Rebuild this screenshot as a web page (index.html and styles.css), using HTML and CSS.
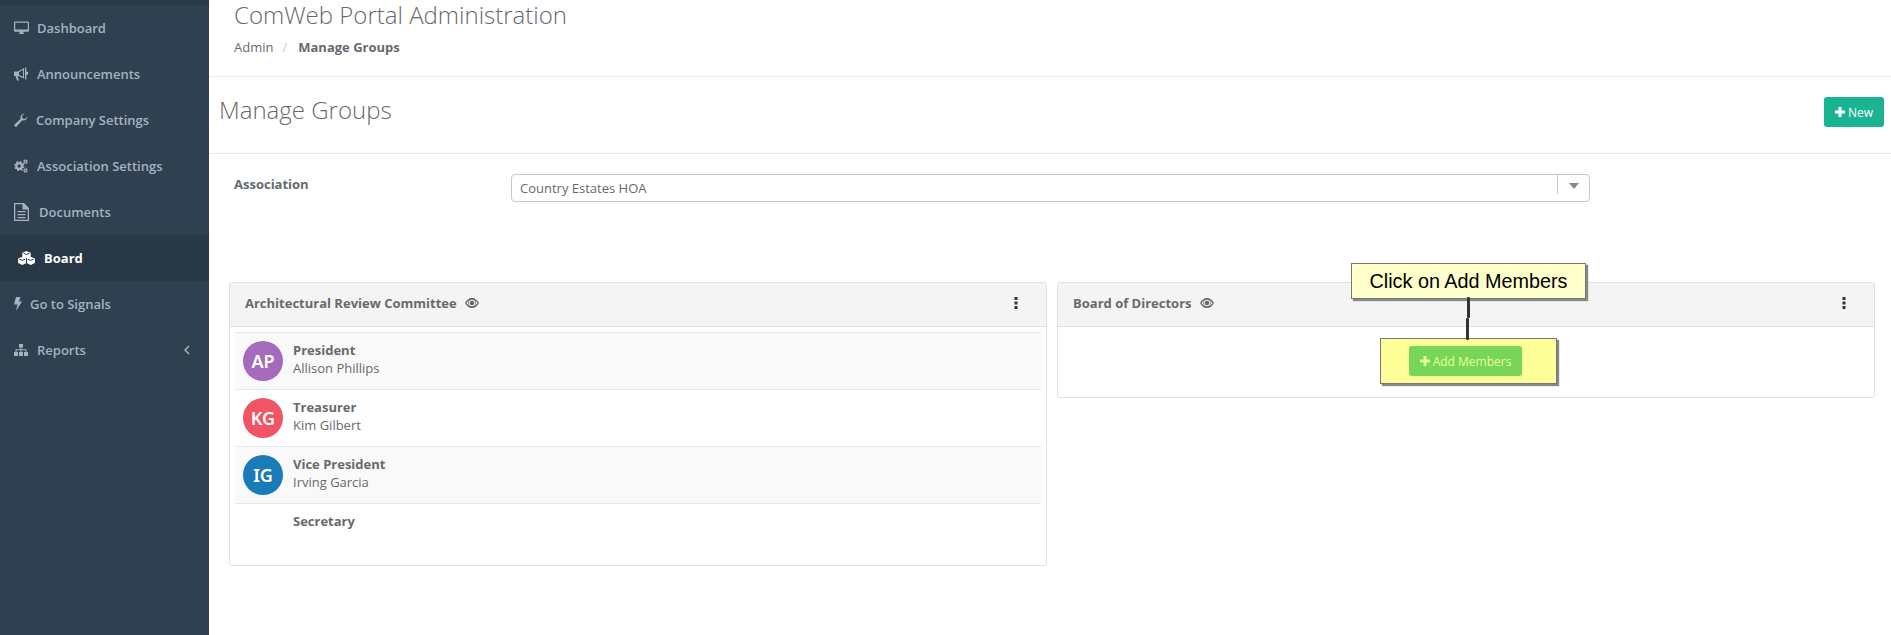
FILE: index.html
```html
<!DOCTYPE html>
<html lang="en">
<head>
<meta charset="utf-8">
<title>Manage Groups</title>
<link rel="stylesheet" href="styles.css">
</head>
<body>
<div class="app">
  <nav class="sidebar">
    <a class="nav-item"><svg class="ni ni-wide" viewBox="0 0 16 14"><path fill-rule="evenodd" d="M1 0h14a1 1 0 0 1 1 1v9a1 1 0 0 1-1 1h-5v1.500l1.500 1h-7l1.500-1V11H1a1 1 0 0 1-1-1V1a1 1 0 0 1 1-1zM1.300 1.300v7.400h13.400V1.300z"/></svg><span class="t1">Dashboard</span></a>
    <a class="nav-item"><svg class="ni" viewBox="0 0 14 14"><path fill-rule="evenodd" d="M0 4.500h4L10 1v10.500L4 9H3.500L5 13.500H3L1.500 9H0zM9 2.800L5 5.200v2.900l4 1.600zM11 .500h1.300v12H11zM12.300 4.800H14v3h-1.700z"/></svg><span class="t2">Announcements</span></a>
    <a class="nav-item"><svg class="ni" viewBox="0 0 14 14"><path d="M13.500 3.500a4 4 0 0 1-5.300 3.800L2.800 13.200a1.300 1.300 0 0 1-2-2l5.900-5.400A4 4 0 0 1 10.500.500L8 3l.5 2.500L11 6l2.500-2.500z"/></svg><span class="t3">Company Settings</span></a>
    <a class="nav-item"><svg class="ni ni-gears" viewBox="0 0 14 14"><circle class="ring" cx="5.200" cy="7" r="2.900"/><circle class="teeth" cx="5.200" cy="7" r="4.500" stroke-dasharray="1.770 1.770"/><circle class="ring-s" cx="11.500" cy="2.700" r="1.300"/><circle class="teeth-s" cx="11.500" cy="2.700" r="2.200" stroke-dasharray="0.860 0.860"/><circle class="ring-s" cx="11.500" cy="11.300" r="1.300"/><circle class="teeth-s" cx="11.500" cy="11.300" r="2.200" stroke-dasharray="0.860 0.860"/></svg><span class="t4">Association Settings</span></a>
    <a class="nav-item"><svg class="ni ni-doc" viewBox="0 0 15 18"><path fill-rule="evenodd" d="M0 0h10l5 5v13H0zM1.300 1.300v15.400h12.400V6.500H8.500V1.300zM3.500 8h8v1.300h-8zM3.500 11h8v1.300h-8zM3.500 14h8v1.300h-8z"/></svg><span class="t5">Documents</span></a>
    <a class="nav-item active"><svg class="ni ni-cubes" viewBox="0 0 17 14"><path d="M8.500 0l4.200 1.800v4.700L8.500 8.300 4.300 6.500V1.800zM4.300 5.700l4.200 1.800V12L4.300 14 .1 12V7.500zM12.700 5.700l4.200 1.800V12l-4.200 2-4.200-2V7.500z"/><path class="cut" d="M5.500 2.200l3 1.300 3-1.300M1.300 8.100l3 1.300 3-1.300M9.700 8.100l3 1.300 3-1.300M8.500 7.400V12"/></svg><span class="t6">Board</span></a>
    <a class="nav-item"><svg class="ni ni-bolt" viewBox="0 0 8 14"><path d="M2 0h4.500L5 4.500h3L2 14l1.500-6.500H0z"/></svg><span class="t7">Go to Signals</span></a>
    <a class="nav-item"><svg class="ni" viewBox="0 0 14 12"><path d="M5 0h4v3.500H7.500V5.300h5V8H14v4h-4V8h1.500V6.300h-4V8H9v4H5V8h1.500V6.300h-4V8H4v4H0V8h1.500V5.300h5V3.500H5z"/></svg><span class="t6b">Reports</span><svg class="chev" viewBox="0 0 6 10"><path d="M5 1L1 5l4 4" fill="none" stroke-width="1.500"/></svg></a>
  </nav>
  <main class="main">
    <header class="top">
      <h2>ComWeb Portal Administration</h2>
      <div class="crumbs"><span>Admin</span><i>/</i><b>Manage Groups</b></div>
    </header>
    <section class="title-bar">
      <h1>Manage Groups</h1>
      <a class="btn-new"><svg class="plus" viewBox="0 0 10 10"><path d="M3.500 0h3v3.500H10v3H6.500V10h-3V6.500H0v-3h3.500z"/></svg> New</a>
    </section>
    <section class="assoc">
      <label>Association</label>
      <div class="select"><span>Country Estates HOA</span><div class="arrow"><em></em></div></div>
    </section>
    <section class="panels">
      <article class="panel">
        <div class="panel-head">
          <span class="name">Architectural Review Committee</span>
          <svg class="eye" viewBox="0 0 14 10"><path fill-rule="evenodd" d="M7 0c3 0 5.500 2 7 5-1.500 3-4 5-7 5S1.500 8 0 5c1.500-3 4-5 7-5zM7 1.800a3.200 3.200 0 1 0 0 6.400 3.200 3.200 0 0 0 0-6.400zM1.500 5c1 1.500 2 2.500 3 3a4 4 0 0 1 0-6c-1 .5-2 1.500-3 3zM9.500 2a4 4 0 0 1 0 6c1-.5 2-1.500 3-3-1-1.500-2-2.500-3-3z"/><circle cx="7" cy="5" r="2.300"/></svg>
          <svg class="dots" viewBox="0 0 4 12"><rect x="0.500" y="0" width="3" height="3"/><rect x="0.500" y="4.500" width="3" height="3"/><rect x="0.500" y="9" width="3" height="3"/></svg>
        </div>
        <div class="rows">
          <div class="row shade"><div class="av purple">AP</div><div><b>President</b><p>Allison Phillips</p></div></div>
          <div class="row"><div class="av red">KG</div><div><b>Treasurer</b><p>Kim Gilbert</p></div></div>
          <div class="row shade"><div class="av blue">IG</div><div><b>Vice President</b><p>Irving Garcia</p></div></div>
          <div class="row last"><div class="av none"></div><div><b>Secretary</b></div></div>
        </div>
      </article>
      <article class="panel">
        <div class="panel-head">
          <span class="name">Board of Directors</span>
          <svg class="eye" viewBox="0 0 14 10"><path fill-rule="evenodd" d="M7 0c3 0 5.500 2 7 5-1.500 3-4 5-7 5S1.500 8 0 5c1.500-3 4-5 7-5zM7 1.800a3.200 3.200 0 1 0 0 6.400 3.200 3.200 0 0 0 0-6.400zM1.500 5c1 1.500 2 2.500 3 3a4 4 0 0 1 0-6c-1 .5-2 1.500-3 3zM9.500 2a4 4 0 0 1 0 6c1-.5 2-1.500 3-3-1-1.500-2-2.500-3-3z"/><circle cx="7" cy="5" r="2.300"/></svg>
          <svg class="dots" viewBox="0 0 4 12"><rect x="0.500" y="0" width="3" height="3"/><rect x="0.500" y="4.500" width="3" height="3"/><rect x="0.500" y="9" width="3" height="3"/></svg>
        </div>
        <div class="add-body">
          <div class="highlight"><a class="btn-add"><svg class="plus" viewBox="0 0 10 10"><path d="M3.500 0h3v3.500H10v3H6.500V10h-3V6.500H0v-3h3.500z"/></svg> Add Members</a></div>
        </div>
        <div class="callout">Click on Add Members</div>
        <div class="connector upper"></div>
        <div class="connector lower"></div>
      </article>
    </section>
  </main>
</div>
</body>
</html>
```
FILE: styles.css
```css
* { box-sizing: border-box; }
html, body { margin: 0; padding: 0; height: 100%; overflow: hidden; }
body { font-family: "Open Sans", sans-serif; font-size: 13px; color: #676a6c; background: #fff; }
.app { display: flex; height: 635px; }

.sidebar { width: 209px; flex: none; background: #2f4050; border-top: 5px solid #293846; }
.nav-item { display: flex; align-items: center; height: 46px; padding-left: 14px; color: #a7b1c2; font-weight: 600; font-size: 13px; }
.ni { width: 14px; height: 14px; fill: #a7b1c2; flex: none; }
.ni-wide { width: 15px; }
.ni-doc { width: 15px; height: 18px; }
.ni-bolt { width: 8px; }
.ni-gears .ring { fill: none; stroke: #a7b1c2; stroke-width: 2.400; }
.ni-gears .teeth { fill: none; stroke: #a7b1c2; stroke-width: 1.200; }
.ni-gears .ring-s { fill: none; stroke: #a7b1c2; stroke-width: 1.100; }
.ni-gears .teeth-s { fill: none; stroke: #a7b1c2; stroke-width: 0.800; }
.t1 { margin-left: 8px; }
.t2 { margin-left: 9px; }
.t3 { margin-left: 8px; }
.t4 { margin-left: 9px; }
.t5 { margin-left: 10px; }
.t6 { margin-left: 9px; }
.t6b { margin-left: 9px; }
.t7 { margin-left: 8px; }
.active { background: #293846; color: #fff; font-weight: 700; padding-left: 18px; }
.ni-cubes { width: 17px; fill: #fff; }
.cut { fill: none; stroke: #293846; stroke-width: 1; }
.chev { width: 6px; height: 10px; margin-left: auto; margin-right: 19px; stroke: #a7b1c2; }

.main { flex: 1; min-width: 0; }
.top { height: 77px; padding-left: 25px; border-bottom: 1px solid #e7eaec; }
.top h2 { margin: 0; font-weight: 300; font-size: 24px; line-height: 30px; }
.crumbs { margin-top: 8px; font-size: 13px; line-height: 18px; }
.crumbs i { font-style: normal; color: #ccc; margin: 0 11px 0 9px; }
.crumbs b { font-weight: 700; }

.title-bar { height: 77px; display: flex; align-items: flex-start; justify-content: space-between; padding: 18px 7px 0 10px; border-bottom: 1px solid #e7eaec; }
.title-bar h1 { margin: 0; font-weight: 300; font-size: 24px; line-height: 30px; }
.btn-new { display: flex; align-items: center; justify-content: center; gap: 3px; width: 60px; height: 30px; margin-top: 2px; background: #1ab394; color: #fff; font-size: 12px; font-weight: 400; border-radius: 3px; }
.plus { width: 10px; height: 10px; fill: currentColor; flex: none; }

.assoc { display: flex; padding: 20px 0 0 25px; height: 128px; }
.assoc label { width: 277px; font-weight: 700; line-height: 20px; }
.select { width: 1079px; height: 28px; border: 1px solid #c8c8c8; border-radius: 4px; display: flex; justify-content: space-between; padding-left: 8px; line-height: 26px; }
.arrow { width: 32px; height: 19px; border-left: 1px solid #c8c8c8; display: flex; justify-content: center; padding-top: 8px; }
.arrow em { width: 0; height: 0; border-left: 5.500px solid transparent; border-right: 5.500px solid transparent; border-top: 6px solid #888; }

.panels { display: flex; align-items: flex-start; gap: 10px; padding: 0 16px 0 20px; }
.panel { flex: 1; position: relative; border: 1px solid #e0e0e0; border-radius: 3px; background: #fff; }
.panel-head { height: 44px; background: #f4f4f4; border-bottom: 1px solid #e0e0e0; display: flex; align-items: center; padding: 0 15px 4px; }
.name { font-weight: 700; font-size: 13px; color: #676a6c; }
.eye { width: 14px; height: 10px; margin-left: 8px; fill: #676a6c; }
.dots { width: 4px; height: 12px; margin-left: auto; margin-right: 13px; fill: #333; }

.rows { padding: 5px 5px 17px; }
.row { height: 57px; border-top: 1px solid #e7eaec; display: flex; gap: 10px; padding: 8px 8px 0; }
.row.last { height: 45px; }
.shade { background: #f9f9f9; }
.row b { display: block; font-weight: 700; line-height: 18px; }
.row p { margin: 0; line-height: 18px; }
.av { width: 40px; height: 40px; border-radius: 50%; flex: none; color: #fff; font-family: "Noto Sans", sans-serif; font-size: 18px; font-weight: 600; display: flex; align-items: center; justify-content: center; }
.purple { background: #a569bd; }
.red { background: #f15464; }
.blue { background: #1a7bb9; }
.none { background: none; }

.add-body { height: 70px; padding: 11px 0 0 322px; }
.highlight { width: 177px; height: 46px; background: #ffff99; border: 1px solid #777; box-shadow: 2px 2px 1px #888; display: flex; align-items: center; padding-left: 28px; }
.btn-add { display: flex; align-items: center; justify-content: center; gap: 3px; width: 113px; height: 30px; background: #77d65a; color: #e8ff90; font-size: 12px; border-radius: 3px; }
.callout { position: absolute; left: 293px; top: -20px; width: 235px; height: 36px; background: #ffffcc; border: 1px solid #777; box-shadow: 2px 2px 1px #888; display: flex; align-items: center; justify-content: center; font-family: "Liberation Sans", sans-serif; font-size: 19.800px; color: #000; }
.connector { position: absolute; width: 3px; background: #333; border-radius: 1px; }
.upper { left: 409px; top: 14px; height: 21px; }
.lower { left: 408px; top: 35px; height: 22px; }
```
